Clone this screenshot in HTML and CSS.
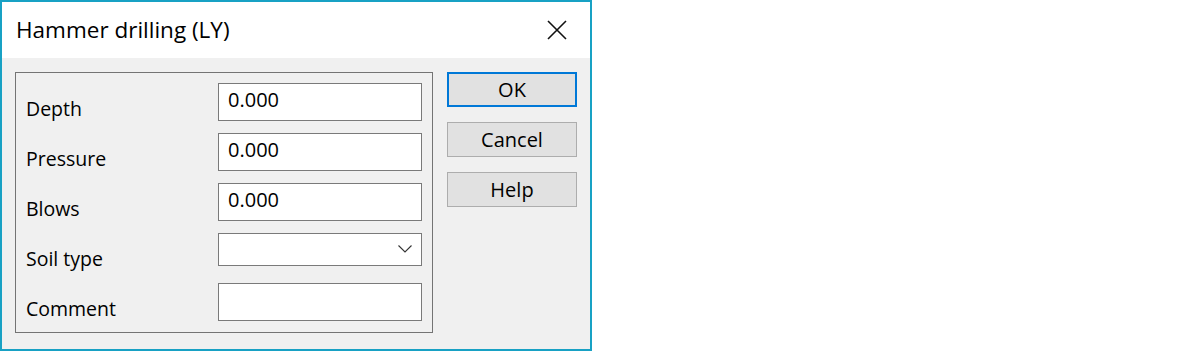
FILE: index.html
```html
<!DOCTYPE html>
<html lang="en">
<head>
  <meta charset="UTF-8">
  <title>Hammer drilling (LY)</title>
  <link rel="stylesheet" href="styles.css">
</head>
<body>

  <div id="dialog">
    <div class="titlebar">
      <span class="title">Hammer drilling (LY)</span>
      <svg class="close" width="20" height="20" viewBox="0 0 20 20">
        <path d="M1 1 L19 19 M19 1 L1 19" stroke="#111" stroke-width="1.6" fill="none" />
      </svg>
    </div>

    <div class="content">
      <div class="group">
        <label for="depth">Depth</label>
        <input type="text" id="depth" value="0.000" />

        <label for="pressure">Pressure</label>
        <input type="text" id="pressure" value="0.000" />

        <label for="blows">Blows</label>
        <input type="text" id="blows" value="0.000" />

        <label for="soil">Soil type</label>
        <div class="combo" id="soil">
          <svg width="14" height="8" viewBox="0 0 14 8">
            <path d="M0.5 0.5 L7 7 L13.5 0.5" stroke="#333" stroke-width="1.1" fill="none" />
          </svg>
        </div>

        <label for="comment">Comment</label>
        <input type="text" id="comment" value="" />
      </div>

      <div class="buttons">
        <button class="default">OK</button>
        <button>Cancel</button>
        <button>Help</button>
      </div>
    </div>
  </div>

</body>
</html>
```

FILE: styles.css
```css
body {
  margin: 0;
  background-color: #ffffff;
  font-family: "Open Sans", "Noto Sans", sans-serif;
  color: #000000;
}

#dialog {
  box-sizing: border-box;
  width: 592px;
  height: 351px;
  border: 2px solid #18a1c4;
  background-color: #f0f0f0;
  display: flex;
  flex-direction: column;
}

.titlebar {
  height: 56px;
  background-color: #ffffff;
  display: flex;
  align-items: center;
  justify-content: space-between;
  padding: 0 23px 0 14px;
}

.title {
  font-size: 22.5px;
  margin-top: -1px;
}

.close {
  display: block;
}

.content {
  display: flex;
  align-items: flex-start;
  gap: 14px;
  padding: 14px 0 0 13px;
}

.group {
  box-sizing: border-box;
  width: 418px;
  height: 261px;
  border: 1px solid #747474;
  padding: 10px 10px 0 10px;
  display: grid;
  grid-template-columns: 192px 204px;
  grid-auto-rows: 38px;
  row-gap: 12px;
}

label {
  font-size: 19.5px;
  padding-top: 12px;
  line-height: 27px;
}

input[type="text"] {
  box-sizing: border-box;
  height: 38px;
  margin: 0;
  border: 1px solid #7a7a7a;
  background-color: #ffffff;
  font-family: inherit;
  font-size: 20px;
  padding: 0 8px 6px 9px;
  outline: none;
}

.combo {
  box-sizing: border-box;
  height: 33px;
  border: 1px solid #7a7a7a;
  background-color: #ffffff;
  display: flex;
  align-items: center;
  justify-content: flex-end;
  padding: 0 9px 1px 0;
}

.combo svg {
  display: block;
}

.buttons {
  display: flex;
  flex-direction: column;
  gap: 15px;
}

button {
  box-sizing: border-box;
  width: 130px;
  height: 35px;
  margin: 0;
  border: 1px solid #adadad;
  background-color: #e1e1e1;
  font-family: inherit;
  font-size: 20px;
  color: #000000;
  padding: 0 0 1px 0;
}

button.default {
  border: 2px solid #0078d7;
}
```
